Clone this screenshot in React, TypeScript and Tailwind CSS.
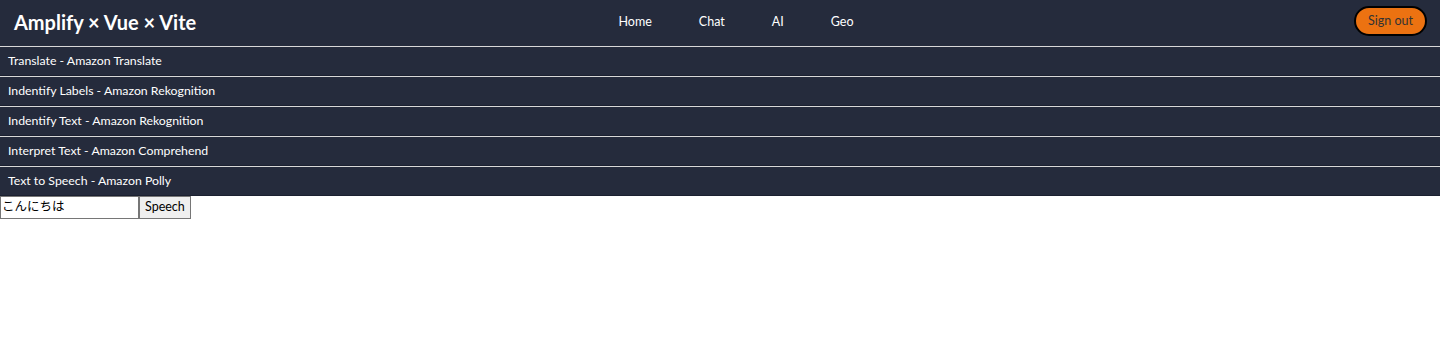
import { useState } from "react";

const services = [
  "Translate - Amazon Translate",
  "Indentify Labels - Amazon Rekognition",
  "Indentify Text - Amazon Rekognition",
  "Interpret Text - Amazon Comprehend",
  "Text to Speech - Amazon Polly",
];

const navItems = ["Home", "Chat", "AI", "Geo"];

export default function App() {
  const [text, setText] = useState("こんにちは");

  return (
    <div className="min-h-[349px] bg-white font-['Lato','Noto_Sans_CJK_JP',sans-serif] text-[13px] text-black">
      <header className="flex h-[46px] items-center justify-between bg-[#252b3c] pl-[14px] pr-[13px]">
        <h1 className="w-[300px] pb-[2px] text-[20px] font-bold text-white">Amplify × Vue × Vite</h1>
        <nav className="ml-[31px] flex gap-[47px] pb-[2px] text-[12.5px] text-white">
          {navItems.map((item) => (
            <a key={item} href="#" className="block">
              {item}
            </a>
          ))}
        </nav>
        <div className="flex w-[300px] justify-end pb-[4px]">
          <button
            type="button"
            className="h-[30px] rounded-full border-2 border-black bg-[#ec7211] px-[12px] text-[12.5px] text-[#333]"
          >
            Sign out
          </button>
        </div>
      </header>

      <div className="flex flex-col">
        {services.map((s) => (
          <div
            key={s}
            className="flex h-[30px] items-center border-t border-b border-t-[#d8d8d8] border-b-[#1b2030] bg-[#252b3c] pl-[8px] text-[12.3px] text-white"
          >
            {s}
          </div>
        ))}
      </div>

      <div className="flex h-[23px] items-stretch text-[12.5px]">
        <input
          className="w-[139px] border border-[#767676] px-[1px] outline-none"
          value={text}
          onChange={(e) => setText(e.target.value)}
        />
        <button type="button" className="border border-[#767676] bg-[#efefef] px-[5px]">
          Speech
        </button>
      </div>
    </div>
  );
}
